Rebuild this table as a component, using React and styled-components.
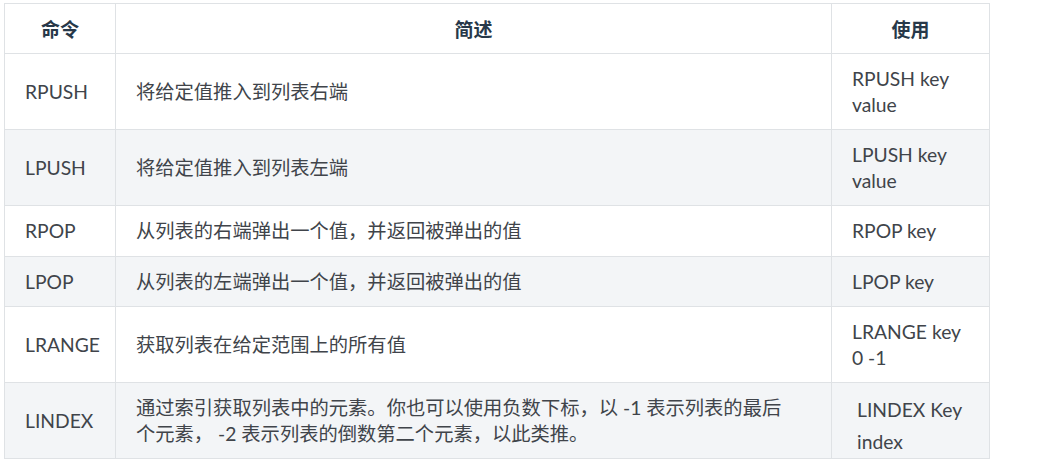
import React from "react";
import styled, { createGlobalStyle } from "styled-components";

const Global = createGlobalStyle`
  html, body { margin: 0; padding: 0; background: #fff; }
  body { font-family: "Lato", "Noto Sans CJK SC", sans-serif; }
`;

const Wrap = styled.div`
  padding: 3px 0 0 4px;
`;

const Table = styled.table`
  border-collapse: collapse;
  width: 985px;
  table-layout: fixed;
  font-size: 19.3px;
  color: #40444a;
`;

const Th = styled.th`
  border: 1px solid #dfe2e5;
  height: 49px;
  padding: 0 20px;
  font-weight: 700;
  color: #273849;
  text-align: center;
  line-height: 26px;
  font-family: "Noto Sans CJK SC", sans-serif;
  font-size: 19px;
`;

const Row = styled.tr`
  background: ${(p) => (p.$striped ? "#f3f5f7" : "#ffffff")};
`;

const Td = styled.td`
  border: 1px solid #dfe2e5;
  padding: ${(p) => (p.$loose ? "11px 12px 0 25px" : "12px 20px 12px 20px")};
  line-height: ${(p) => (p.$loose ? "32px" : "25.5px")};
  vertical-align: middle;
  white-space: pre-line;
`;

const rows = [
  ["RPUSH", "将给定值推入到列表右端", "RPUSH key\nvalue"],
  ["LPUSH", "将给定值推入到列表左端", "LPUSH key\nvalue"],
  ["RPOP", "从列表的右端弹出一个值，并返回被弹出的值", "RPOP key"],
  ["LPOP", "从列表的左端弹出一个值，并返回被弹出的值", "LPOP key"],
  ["LRANGE", "获取列表在给定范围上的所有值", "LRANGE key\n0 -1"],
  [
    "LINDEX",
    "通过索引获取列表中的元素。你也可以使用负数下标，以 -1 表示列表的最后\n个元素， -2 表示列表的倒数第二个元素，以此类推。",
    "LINDEX Key\nindex",
    true,
  ],
];

export default function App() {
  return (
    <Wrap>
      <Global />
      <Table>
        <colgroup>
          <col style={{ width: "111px" }} />
          <col style={{ width: "716px" }} />
          <col style={{ width: "158px" }} />
        </colgroup>
        <thead>
          <tr>
            <Th>命令</Th>
            <Th>简述</Th>
            <Th>使用</Th>
          </tr>
        </thead>
        <tbody>
          {rows.map(([cmd, desc, use, loose], i) => (
            <Row key={cmd} $striped={i % 2 === 1}>
              <Td>{cmd}</Td>
              <Td>{desc}</Td>
              <Td $loose={loose}>{use}</Td>
            </Row>
          ))}
        </tbody>
      </Table>
    </Wrap>
  );
}
